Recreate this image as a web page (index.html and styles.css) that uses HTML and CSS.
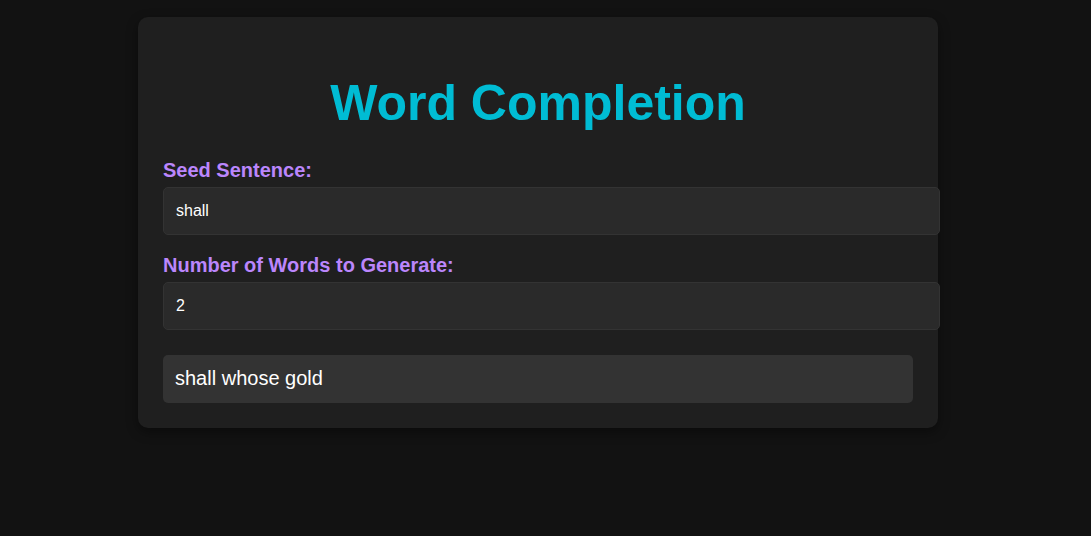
FILE: index.html
```html
<!DOCTYPE html>
<html lang="en">
<head>
    <meta charset="UTF-8">
    <meta name="viewport" content="width=device-width, initial-scale=1.0">
    <title>Word Completion</title>
    <link rel="stylesheet" href="styles.css">
</head>
<body>

    <div class="container">
        <h1>Word Completion</h1>

        <label for="seed">Seed Sentence:</label>
        <input type="text" id="seed" value="shall">

        <label for="count">Number of Words to Generate:</label>
        <input type="number" id="count" value="2" min="1">

        <div class="result" id="result">shall whose gold</div>
    </div>

</body>
</html>
```

FILE: styles.css
```css
/* Dark theme base */
body {
    font-family: "Liberation Sans", Arial, sans-serif;
    background-color: #121212;
    color: #e0e0e0;
    margin: 0;
    padding: 17px 15px 17px 0;
}

.container {
    width: 750px;
    margin: 0 auto;
    padding: 25px;
    background-color: #1f1f1f;
    border-radius: 10px;
    box-shadow: 0 4px 12px rgba(0, 0, 0, 0.4);
}

h1 {
    text-align: center;
    color: #00bcd4;
    font-size: 50px;
    margin: 32px 0 27px;
}

label {
    display: block;
    color: #bb86fc;
    font-size: 20px;
    font-weight: bold;
    margin-bottom: 5px;
}

input {
    display: block;
    width: 100%;
    padding: 14px 13px 14px 12px;
    margin-bottom: 19px;
    font-family: "Liberation Sans", Arial, sans-serif;
    font-size: 16px;
    color: #fff;
    background-color: #2a2a2a;
    border: 1px solid #333;
    border-radius: 5px;
    outline: none;
}

/* hide the number spinner */
input[type="number"]::-webkit-inner-spin-button,
input[type="number"]::-webkit-outer-spin-button {
    -webkit-appearance: none;
    margin: 0;
}

.result {
    margin-top: 25px;
    padding: 12px 12px 13px;
    font-size: 20px;
    color: #fff;
    background-color: #333;
    border-radius: 5px;
}
```
